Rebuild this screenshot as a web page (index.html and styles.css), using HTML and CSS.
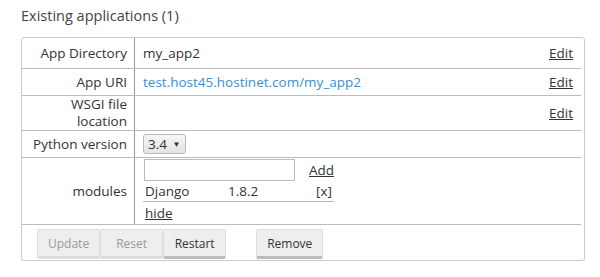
FILE: index.html
```html
<!DOCTYPE html>
<html lang="en">
<head>
    <meta charset="UTF-8">
    <title>Existing applications</title>
    <link rel="stylesheet" href="styles.css">
</head>
<body>
    <div class="container">
        <h3 class="title">Existing applications (1)</h3>

        <div class="app-box">
            <table class="app-table">
                <tr class="first">
                    <td class="label">App Directory</td>
                    <td class="value">my_app2</td>
                    <td class="edit"><a href="#">Edit</a></td>
                </tr>
                <tr>
                    <td class="label">App URI</td>
                    <td class="value"><a class="uri" href="#">test.host45.hostinet.com/my_app2</a></td>
                    <td class="edit"><a href="#">Edit</a></td>
                </tr>
                <tr class="two-line">
                    <td class="label">WSGI file<br>location</td>
                    <td class="value"></td>
                    <td class="edit"><a href="#">Edit</a></td>
                </tr>
                <tr>
                    <td class="label">Python version</td>
                    <td class="value">
                        <span class="select">3.4 <span class="arrow">&#9660;</span></span>
                    </td>
                    <td class="edit"></td>
                </tr>
                <tr class="modules-row">
                    <td class="label">modules</td>
                    <td class="value" colspan="2">
                        <div class="add-row">
                            <input type="text" class="module-input">
                            <a href="#">Add</a>
                        </div>
                        <table class="modules">
                            <tr>
                                <td class="mod-name">Django</td>
                                <td class="mod-ver">1.8.2</td>
                                <td class="mod-del">[x]</td>
                            </tr>
                        </table>
                        <a href="#" class="hide">hide</a>
                    </td>
                </tr>
                <tr class="actions">
                    <td colspan="3">
                        <div class="buttons">
                            <button disabled>Update</button>
                            <button disabled>Reset</button>
                            <button>Restart</button>
                            <button class="remove">Remove</button>
                        </div>
                    </td>
                </tr>
            </table>
        </div>
    </div>
</body>
</html>
```

FILE: styles.css
```css
body {
    font-family: "Open Sans", sans-serif;
    margin: 0;
    padding: 0;
    color: #333;
    background: #fff;
}
.container {
    padding: 5px 15px 0 21px;
}
.title {
    font-size: 14.5px;
    font-weight: normal;
    color: #444;
    margin: 0 0 10px 0;
    line-height: 22px;
}
.app-box {
    width: 559px;
    border: 1px solid #ccc;
    border-radius: 3px;
    padding-right: 3px;
    box-shadow: 0 1px 1px #ddd;
}
.app-table {
    width: 100%;
    border-collapse: collapse;
    font-size: 13.5px;
}
.app-table > tbody > tr > td {
    border-bottom: 1px solid #bbb;
    padding: 2px 8px;
    vertical-align: middle;
    line-height: 22px;
}
.app-table > tbody > tr.first > td {
    height: 26px;
}
.app-table > tbody > tr.two-line > td {
    line-height: 17px;
    padding-top: 0;
    padding-bottom: 0;
}
.label {
    text-align: right;
    width: 97px;
    padding-right: 7px !important;
    border-right: 1px solid #999;
}
.edit {
    text-align: right;
    width: 40px;
}
a {
    color: #333;
}
a.uri {
    color: #3a8fd2;
    text-decoration: none;
}
.select {
    display: inline-block;
    border: 1px solid #bbb;
    border-radius: 3px;
    background: linear-gradient(#f6f6f6, #e4e4e4);
    padding: 0 5px 0 4px;
    font-size: 13.5px;
    line-height: 18px;
}
.arrow {
    font-size: 8px;
    vertical-align: 2px;
    margin-left: 2px;
}
.app-table > tbody > tr.modules-row > td.value {
    padding-top: 1px;
    padding-bottom: 0;
}
.add-row {
    display: flex;
    align-items: center;
    gap: 14px;
    line-height: 20px;
}
.module-input {
    width: 145px;
    height: 18px;
    border: 1px solid #bbb;
    padding: 1px 2px;
    margin: 0 0 0 1px;
}
.modules {
    border-collapse: collapse;
    width: 191px;
    border-bottom: 1px solid #bbb;
}
.modules td {
    padding: 0 2px;
    line-height: 20px;
}
.mod-ver {
    width: 70px;
}
.mod-del {
    text-align: right;
}
.hide {
    display: inline-block;
    margin: 1px 0 0 2px;
    line-height: 18px;
}
.actions td {
    border-bottom: none !important;
    padding: 4px 0 1px 15px !important;
}
.buttons {
    display: flex;
}
button {
    font-family: "Open Sans", sans-serif;
    font-size: 12px;
    color: #333;
    background: #eee;
    border: 1px solid #ddd;
    border-bottom: 3px solid #bbb;
    border-radius: 2px;
    padding: 4px 10px 3px;
    min-width: 63px;
    line-height: 19px;
}
button:disabled {
    color: #999;
    border-bottom-color: #ddd;
}
.remove {
    margin-left: 30px;
}
```
